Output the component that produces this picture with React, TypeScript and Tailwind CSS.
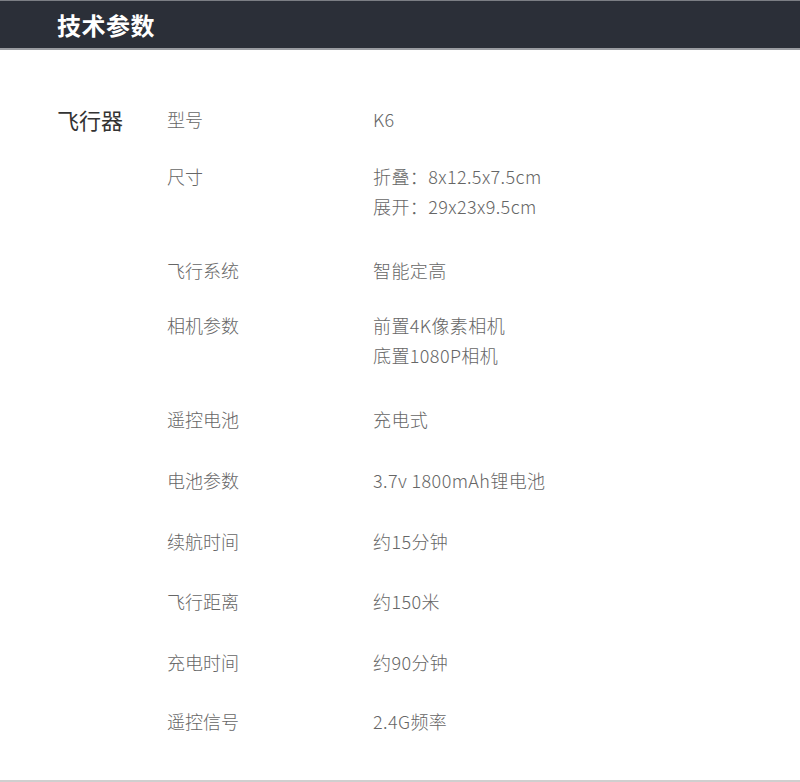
const specs = [
  { label: "型号", lines: ["K6"], mt: "mt-0" },
  { label: "尺寸", lines: ["折叠：8x12.5x7.5cm", "展开：29x23x9.5cm"], mt: "mt-[27px]" },
  { label: "飞行系统", lines: ["智能定高"], mt: "mt-[34px]" },
  { label: "相机参数", lines: ["前置4K像素相机", "底置1080P相机"], mt: "mt-[25px]" },
  { label: "遥控电池", lines: ["充电式"], mt: "mt-[34px]" },
  { label: "电池参数", lines: ["3.7v 1800mAh锂电池"], mt: "mt-[31px]" },
  { label: "续航时间", lines: ["约15分钟"], mt: "mt-[31px]" },
  { label: "飞行距离", lines: ["约150米"], mt: "mt-[30px]" },
  { label: "充电时间", lines: ["约90分钟"], mt: "mt-[31px]" },
  { label: "遥控信号", lines: ["2.4G频率"], mt: "mt-[29px]" },
];

export default function App() {
  return (
    <div className="w-[800px] h-[782px] bg-white flex flex-col font-['Noto_Sans_CJK_SC','Noto_Sans',sans-serif]">
      {/* Header */}
      <div className="h-[50px] shrink-0 bg-[#2b2f38] border-t border-[#7b7e84] border-b-2 border-b-[#9a9ca1] flex items-center pl-[57px]">
        <h1 className="text-[24px] font-semibold text-white tracking-[0.5px]">技术参数</h1>
      </div>

      {/* Specs */}
      <div className="flex-1 min-h-0 overflow-hidden flex pt-[54px] pl-[57px]">
        <div className="w-[110px] text-[22px] font-normal text-[#333] leading-[30px]">飞行器</div>
        <div className="flex flex-col">
          {specs.map((s) => (
            <div key={s.label} className={`flex ${s.mt}`}>
              <div className="w-[206px] text-[18px] text-[#666] leading-[30px] font-light">{s.label}</div>
              <div className="flex flex-col text-[18px] text-[#666] leading-[30px] font-light tracking-[0.4px]">
                {s.lines.map((l) => (
                  <span key={l}>{l}</span>
                ))}
              </div>
            </div>
          ))}
        </div>
      </div>

      <div className="h-[2px] shrink-0 bg-[#cfcfcf]" />
    </div>
  );
}
